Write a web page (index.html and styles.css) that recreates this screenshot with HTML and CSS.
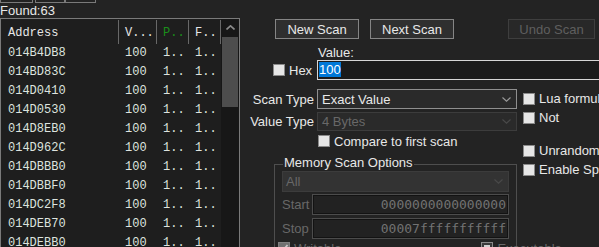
FILE: index.html
```html
<!DOCTYPE HTML>
<html>
    <head>
        <title>Cheat Engine</title>
        <meta charset="utf-8" />
        <link rel="stylesheet" href="styles.css">
    </head>
    <body>
        <div class="window">
            <div class="left">
                <div class="toolbar">
                    <span class="tool t1"></span>
                    <span class="tool t2"></span>
                    <span class="tool t3"></span>
                </div>
                <div class="found">Found:63</div>
                <div class="list">
                    <div class="table">
                        <div class="row head">
                            <div class="c addr">Address</div>
                            <div class="c val">V...</div>
                            <div class="c prev">P..</div>
                            <div class="c first">F..</div>
                        </div>
                        <div class="row"><div class="c addr">014B4DB8</div><div class="c val">100</div><div class="c prev">1..</div><div class="c first">1..</div></div>
                        <div class="row"><div class="c addr">014BD83C</div><div class="c val">100</div><div class="c prev">1..</div><div class="c first">1..</div></div>
                        <div class="row"><div class="c addr">014D0410</div><div class="c val">100</div><div class="c prev">1..</div><div class="c first">1..</div></div>
                        <div class="row"><div class="c addr">014D0530</div><div class="c val">100</div><div class="c prev">1..</div><div class="c first">1..</div></div>
                        <div class="row"><div class="c addr">014D8EB0</div><div class="c val">100</div><div class="c prev">1..</div><div class="c first">1..</div></div>
                        <div class="row"><div class="c addr">014D962C</div><div class="c val">100</div><div class="c prev">1..</div><div class="c first">1..</div></div>
                        <div class="row"><div class="c addr">014DBBB0</div><div class="c val">100</div><div class="c prev">1..</div><div class="c first">1..</div></div>
                        <div class="row"><div class="c addr">014DBBF0</div><div class="c val">100</div><div class="c prev">1..</div><div class="c first">1..</div></div>
                        <div class="row"><div class="c addr">014DC2F8</div><div class="c val">100</div><div class="c prev">1..</div><div class="c first">1..</div></div>
                        <div class="row"><div class="c addr">014DEB70</div><div class="c val">100</div><div class="c prev">1..</div><div class="c first">1..</div></div>
                        <div class="row"><div class="c addr">014DEBB0</div><div class="c val">100</div><div class="c prev">1..</div><div class="c first">1..</div></div>
                    </div>
                    <div class="scrollbar">
                        <div class="arrow">
                            <svg width="9" height="5" viewBox="0 0 9 5"><polyline points="0.5,4.5 4.5,0.8 8.5,4.5" fill="none" stroke="#8a8a8a" stroke-width="1.6"/></svg>
                        </div>
                        <div class="thumb"></div>
                    </div>
                </div>
            </div>

            <div class="right">
                <div class="buttons">
                    <div class="btn new">New Scan</div>
                    <div class="btn next">Next Scan</div>
                    <div class="btn undo">Undo Scan</div>
                </div>
                <div class="form">
                    <div class="main">
                        <div class="value-cap">Value:</div>
                        <div class="hex-row">
                            <div class="hex"><span class="box"></span><span class="text">Hex</span></div>
                            <div class="input"><span class="sel">100</span></div>
                        </div>
                        <div class="field-row scan-type">
                            <div class="label">Scan Type</div>
                            <div class="select">
                                <span>Exact Value</span>
                                <svg width="9" height="5" viewBox="0 0 9 5"><polyline points="0.5,0.5 4.5,4.2 8.5,0.5" fill="none" stroke="#9a9a9a" stroke-width="1.1"/></svg>
                            </div>
                        </div>
                        <div class="field-row value-type">
                            <div class="label">Value Type</div>
                            <div class="select off">
                                <span>4 Bytes</span>
                                <svg width="9" height="5" viewBox="0 0 9 5"><polyline points="0.5,0.5 4.5,4.2 8.5,0.5" fill="none" stroke="#4a4a4a" stroke-width="1.1"/></svg>
                            </div>
                        </div>
                        <div class="compare"><span class="box"></span><span class="text">Compare to first scan</span></div>

                        <div class="group">
                            <div class="group-title">Memory Scan Options</div>
                            <div class="select off all">
                                <span>All</span>
                                <svg width="9" height="5" viewBox="0 0 9 5"><polyline points="0.5,0.5 4.5,4.2 8.5,0.5" fill="none" stroke="#4a4a4a" stroke-width="1.1"/></svg>
                            </div>
                            <div class="range start">
                                <div class="range-label">Start</div>
                                <div class="hexfield">0000000000000000</div>
                            </div>
                            <div class="range stop">
                                <div class="range-label">Stop</div>
                                <div class="hexfield">00007fffffffffff</div>
                            </div>
                            <div class="perms">
                                <div class="perm writable">
                                    <span class="box checked">
                                        <svg width="10" height="10" viewBox="0 0 10 10"><polyline points="1.5,5 4,7.5 8.5,2" fill="none" stroke="#c8c8c8" stroke-width="1.8"/></svg>
                                    </span>
                                    <span class="text">Writable</span>
                                </div>
                                <div class="perm executable"><span class="box mixed"></span><span class="text">Executable</span></div>
                            </div>
                        </div>
                    </div>

                    <div class="options">
                        <div class="opt lua"><span class="box"></span><span class="text">Lua formula</span></div>
                        <div class="opt not"><span class="box"></span><span class="text">Not</span></div>
                        <div class="opt unrand"><span class="box"></span><span class="text">Unrandomizer</span></div>
                        <div class="opt speed"><span class="box"></span><span class="text">Enable Speedhack</span></div>
                    </div>
                </div>
            </div>
        </div>
    </body>
</html>
```

FILE: styles.css
```css
* {
    box-sizing: border-box;
}

html, body {
    margin: 0;
    height: 100%;
}

body {
    background-color: #232323;
    color: #e8e8e8;
    font-family: "Liberation Sans", Arial, sans-serif;
    font-size: 13px;
    overflow: hidden;
}

.window {
    display: flex;
    height: 247px;
}

/* left: found list */

.left {
    width: 240px;
    display: flex;
    flex-direction: column;
}

.toolbar {
    height: 3px;
    display: flex;
}

.tool {
    height: 3px;
    border: 1px solid #7a7a7a;
    border-top: none;
}

.t1 { width: 33px; }
.t2 { width: 30px; margin-left: 2px; }
.t3 { width: 31px; }

.found {
    height: 15px;
    padding-top: 1px;
    line-height: 14px;
}

.list {
    flex: 1;
    display: flex;
    border: 1px solid #7a7a7a;
    border-bottom: none;
    background-color: #1e1e1e;
    overflow: hidden;
}

.table {
    width: 220px;
    font-family: "Liberation Mono", "Courier New", monospace;
    font-size: 12px;
    color: #dde3df;
}

.row {
    display: flex;
    height: 19px;
    line-height: 19px;
}

.c {
    padding-left: 6px;
    white-space: nowrap;
    overflow: hidden;
}

.addr { width: 118px; padding-left: 7px; }
.val { width: 38px; }
.prev { width: 32px; }
.first { width: 32px; }

.head {
    height: 25px;
}

.head .c {
    margin-top: 1px;
    height: 24px;
    line-height: 22px;
    padding-top: 2px;
    border-right: 1px solid #686868;
    color: #e6e6e6;
}

.head .prev {
    color: #1a8f1a;
}

.scrollbar {
    width: 18px;
    background-color: #171717;
    display: flex;
    flex-direction: column;
}

.arrow {
    height: 16px;
    margin-top: 1px;
    display: flex;
    align-items: center;
    justify-content: center;
    padding-bottom: 2px;
}

.thumb {
    height: 70px;
    width: 16px;
    margin: 1px 0 0 1px;
    background-color: #4d4d4d;
}

/* right: scan settings */

.right {
    flex: 1;
    display: flex;
    flex-direction: column;
}

.buttons {
    display: flex;
    margin-top: 19px;
    padding-left: 35px;
}

.btn {
    height: 20px;
    width: 84px;
    border: 1px solid #858585;
    background-color: #2f2f2f;
    display: flex;
    align-items: center;
    justify-content: center;
}

.next { margin-left: 11px; }

.undo {
    width: 87px;
    margin-left: 54px;
    border-color: #3e3e3e;
    background-color: #282828;
    color: #5f5f5f;
}

.form {
    display: flex;
}

.main {
    width: 277px;
    flex-shrink: 0;
}

.box {
    width: 12px;
    height: 12px;
    flex-shrink: 0;
    border: 1px solid #8a8a8a;
    background-color: #e6e6e6;
}

.text {
    margin-left: 4px;
    white-space: nowrap;
}

.value-cap {
    margin: 6px 0 0 78px;
    height: 15px;
    line-height: 15px;
}

.hex-row {
    display: flex;
    align-items: center;
    height: 20px;
}

.hex {
    width: 77px;
    flex-shrink: 0;
    padding-left: 33px;
    display: flex;
    align-items: center;
}

.input {
    width: 300px;
    flex-shrink: 0;
    height: 20px;
    border: 1px solid #d6d6d6;
    background-color: #1b1b1b;
    padding-left: 1px;
    line-height: 18px;
}

.sel {
    background-color: #0078d7;
    color: #fff;
}

.field-row {
    display: flex;
    align-items: center;
    height: 20px;
    margin-top: 9px;
}

.value-type {
    height: 19px;
    margin-top: 3px;
}

.label {
    width: 77px;
    flex-shrink: 0;
    text-align: right;
    padding-right: 3px;
    white-space: nowrap;
}

.select {
    width: 200px;
    height: 100%;
    border: 1px solid #8f8f8f;
    background-color: #2a2a2a;
    display: flex;
    align-items: center;
    justify-content: space-between;
    padding: 0 5px 0 4px;
}

.select.off {
    border-color: #3c3c3c;
    color: #686868;
}

.compare {
    display: flex;
    align-items: center;
    height: 12px;
    margin-top: 4px;
    padding-left: 78px;
}

.group {
    margin: 17px 0 0 34px;
    width: 243px;
    height: 120px;
    border: 1px solid #4e4e4e;
}

.group-title {
    display: table;
    margin: -10px 0 0 8px;
    padding: 0 1px;
    line-height: 15px;
    background-color: #232323;
}

.all {
    margin: 1px 0 0 7px;
    width: 227px;
    height: 21px;
    background-color: #333333;
    padding-left: 3px;
}

.range {
    display: flex;
    height: 21px;
    margin-top: 2px;
}

.stop {
    margin-top: 3px;
}

.range-label {
    width: 37px;
    padding-left: 7px;
    line-height: 21px;
    color: #686868;
}

.hexfield {
    width: 197px;
    border: 1px solid #4c4c4c;
    box-shadow: inset 0 0 0 1px #131313;
    background-color: #222222;
    text-align: right;
    padding-right: 2px;
    line-height: 19px;
    font-family: "DejaVu Sans Mono", monospace;
    font-size: 13px;
    color: #727272;
}

.perms {
    display: flex;
    margin-top: 3px;
    padding-left: 3px;
}

.perm {
    display: flex;
    align-items: center;
    height: 12px;
    color: #686868;
}

.executable {
    margin-left: 140px;
}

.box.checked {
    background-color: #707070;
    border-color: #808080;
    display: flex;
    align-items: center;
    justify-content: center;
}

.box.mixed {
    background-color: #d0d0d0;
    border-color: #8a8a8a;
    box-shadow: inset 0 0 0 2px #3a3a3a;
}

.options {
    margin-left: 6px;
    padding-top: 54px;
}

.opt {
    display: flex;
    align-items: center;
    height: 12px;
    line-height: 12px;
    margin-bottom: 7px;
}

.opt.not {
    margin-bottom: 21px;
}
```
